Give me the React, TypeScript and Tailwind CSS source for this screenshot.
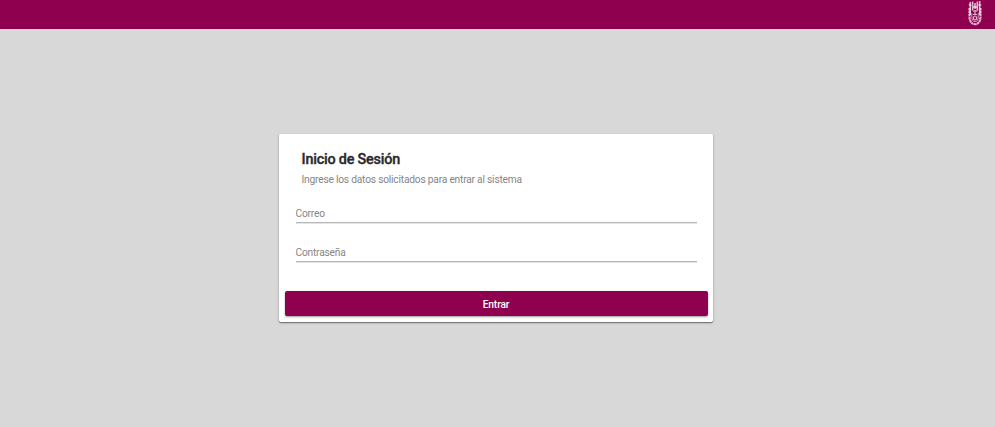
import React from 'react';

function Crest() {
  return (
    <svg width="14" height="26" viewBox="0 0 14 26" fill="none" stroke="#fff" strokeOpacity=".72">
      <path d="M2.200 2v13M4.600 1.500v9M7 3v6M9.300 1.500v9M11.700 1v14" strokeWidth="1.600" />
      <path d="M1.500 8v9c0 4 2 7.200 5.500 7.200s5.500-3.200 5.500-7.200V8" strokeWidth="2.100" strokeDasharray="2.600 .4" />
      <path d="M3.800 13v4c0 3 1 4.600 3.200 4.600s3.200-1.600 3.200-4.600v-4" strokeWidth=".8" />
      <path d="M5 11h4.500M5 14.500h4M7 10v5" strokeWidth="1.200" />
      <ellipse cx="7" cy="18" rx="1.600" ry="2" strokeWidth="1.200" />
      <path d="M.8 5h2.500M10.500 5h2.700M5 7h4" strokeWidth="1.300" />
    </svg>
  );
}

function Field({ label, type }: { label: string; type: string }) {
  return (
    <input
      type={type}
      placeholder={label}
      aria-label={label}
      className="block h-[20px] w-full border-b border-[#b8b8b8] pb-0 pt-px text-[10.2px] leading-[16px] tracking-[-0.2px] text-[#333] shadow-[0_1px_0_#e4e4e4] outline-none placeholder:text-[#858585]"
    />
  );
}

export default function App() {
  return (
    <div className="flex h-screen flex-col bg-[#d8d8d8] font-['Roboto',sans-serif]">
      <header className="flex h-[29px] shrink-0 items-start justify-end bg-[#8f004f] pr-[13px]">
        <Crest />
      </header>
      <main className="flex flex-1 justify-center pr-[3px] pt-[105px]">
        <form className="flex h-[188px] w-[434px] flex-col rounded-[2px] bg-white px-[5.5px] pt-[17px] shadow-[0_1px_1px_rgba(0,0,0,0.4),0_1px_3px_rgba(0,0,0,0.2)]">
          <h1 className="pl-[17px] text-[14.4px] font-medium leading-[18px] tracking-[-0.2px] text-[#2b2829] [-webkit-text-stroke:0.35px_#2b2829]">Inicio de Sesión</h1>
          <p className="mt-[3.5px] pl-[17px] text-[10.2px] leading-[14px] tracking-[-0.2px] text-[#858585]">
            Ingrese los datos solicitados para entrar al sistema
          </p>
          <div className="mt-[16.5px] flex flex-col gap-[19px] pl-[11px] pr-[11px]">
            <Field label="Correo" type="email" />
            <Field label="Contraseña" type="password" />
          </div>
          <button
            type="button"
            className="mt-[29px] h-[25.4px] shrink-0 rounded-[2px] bg-[#8f004f] pt-px text-[10.2px] font-medium tracking-[-0.12px] text-white shadow-[0_1px_2px_rgba(0,0,0,0.4)]"
          >
            Entrar
          </button>
        </form>
      </main>
    </div>
  );
}
